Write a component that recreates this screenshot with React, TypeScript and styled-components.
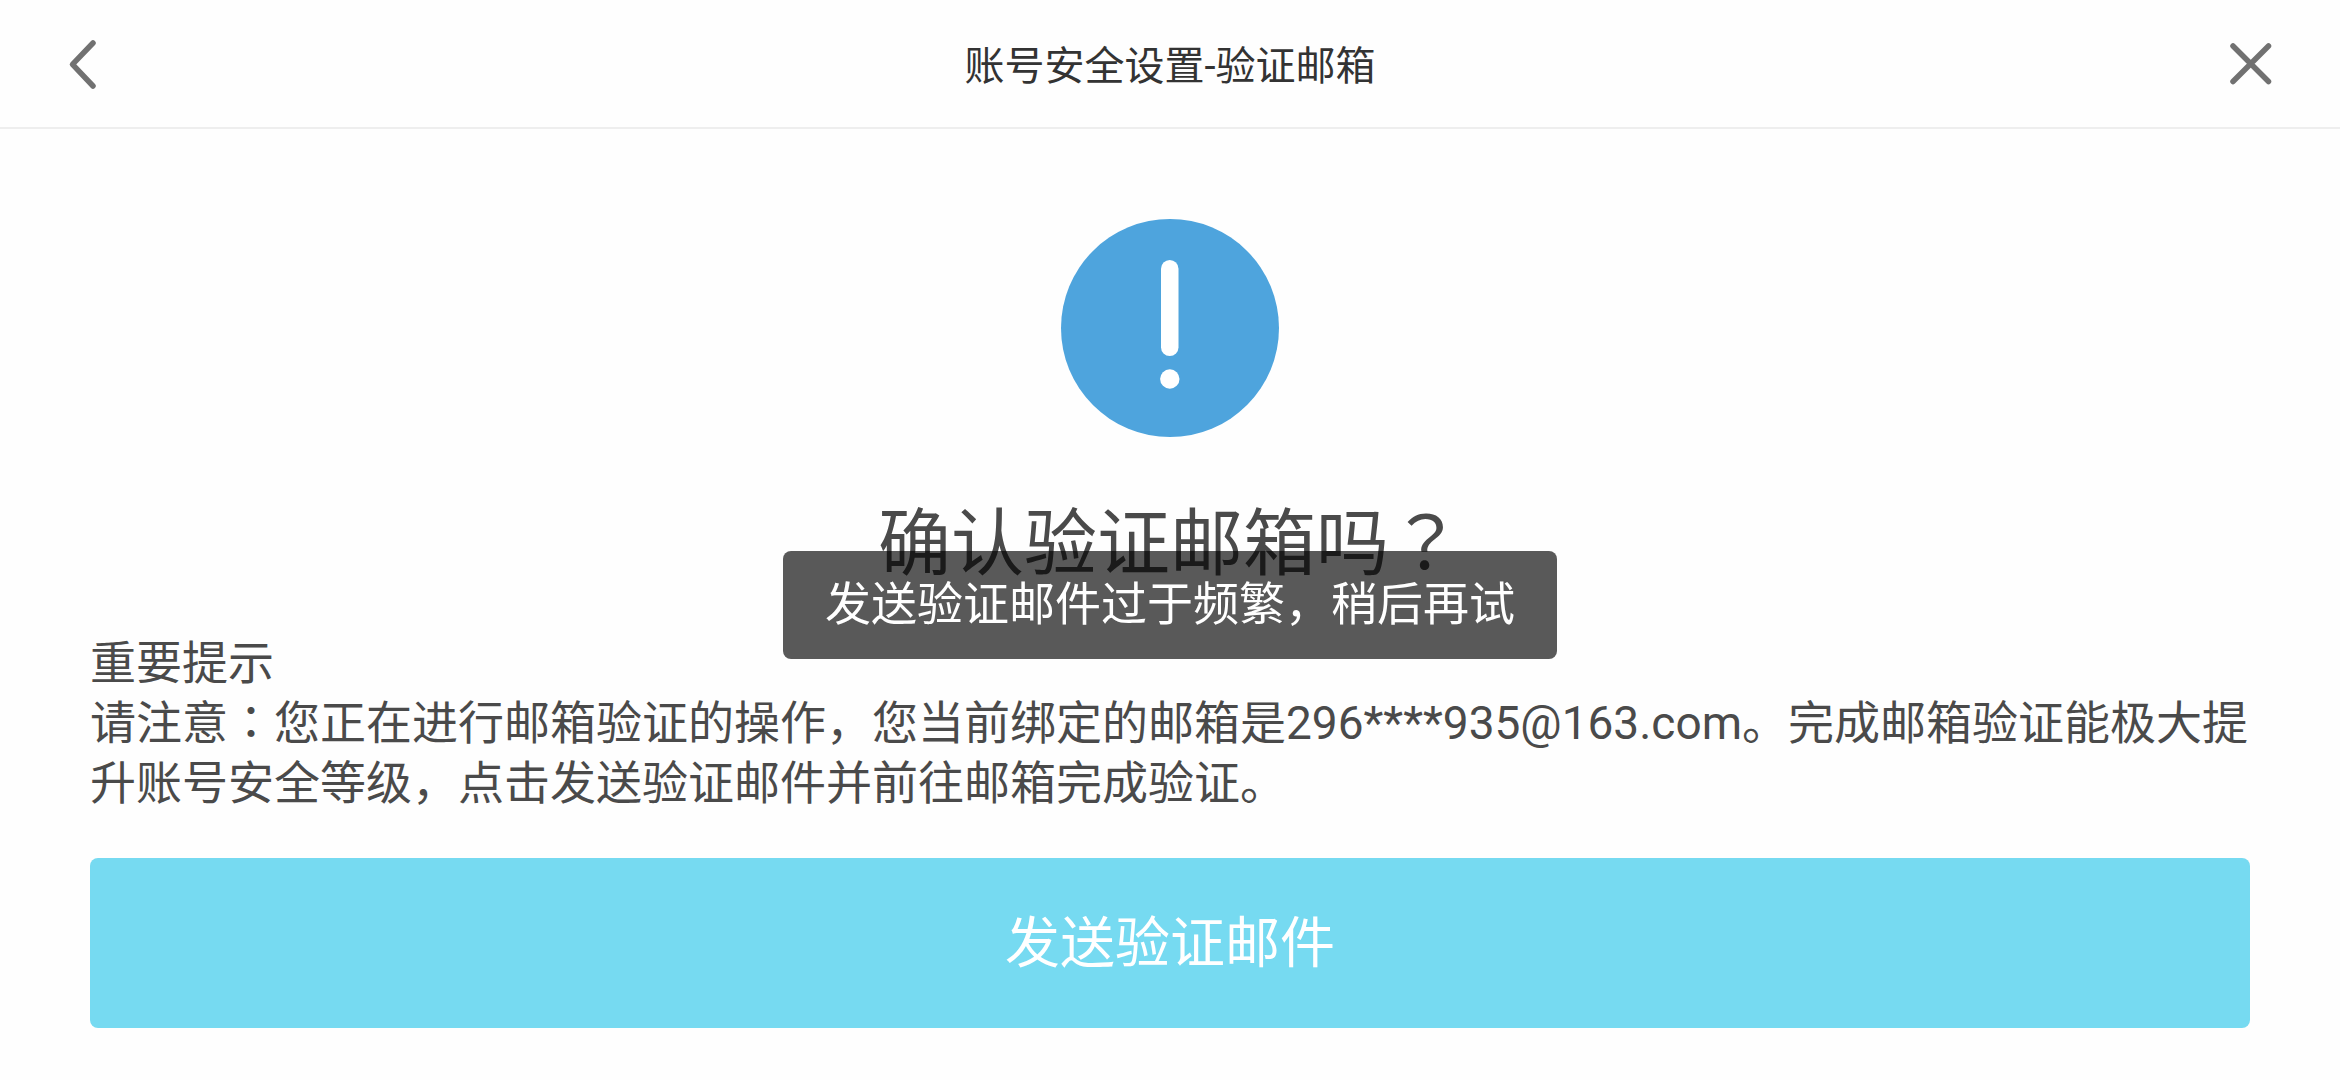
import React, { useState } from "react";
import styled, { createGlobalStyle } from "styled-components";

const GlobalStyle = createGlobalStyle`
  * {
    box-sizing: border-box;
  }

  body {
    margin: 0;
    background: #fefefe;
    color: #4a4a4a;
    font-family: Roboto, "Noto Sans CJK SC", sans-serif;
  }

  button {
    margin: 0;
    padding: 0;
    border: 0;
    background: none;
    font: inherit;
    cursor: pointer;
  }
`;

const Header = styled.header`
  display: flex;
  align-items: center;
  justify-content: space-between;
  height: 129px;
  padding: 0 56px;
  border-bottom: 2px solid #eeeeee;
`;

const HeaderTitle = styled.h1`
  margin: 0;
  padding-top: 6px;
  color: #333333;
  font-size: 40px;
  font-weight: 400;
  line-height: 60px;
`;

const IconButton = styled.button`
  display: flex;
  width: 64px;
  height: 64px;
  color: #717171;
`;

const Main = styled.main`
  display: flex;
  flex-direction: column;
  align-items: center;
  padding: 90px 90px 52px;
`;

const Question = styled.h2`
  margin: 0;
  padding: 51px 0 33px;
  font-size: 73px;
  font-weight: 400;
  line-height: 112px;
`;

const CenteredMark = styled.span`
  font-family: "Noto Sans CJK JP", sans-serif;
  line-height: 1;
`;

const Notice = styled.section`
  width: 100%;
  font-size: 46px;
  line-height: 60px;
`;

const NoticeTitle = styled.h3`
  margin: 0;
  font-size: inherit;
  font-weight: 400;
`;

const NoticeText = styled.p`
  margin: 0;
`;

const SendButton = styled.button`
  && {
    width: 100%;
    height: 170px;
    margin-top: 45px;
    border-radius: 8px;
    background: #76daf1;
    color: #ffffff;
    font-size: 55px;
    line-height: 80px;
  }
`;

const ToastLayer = styled.div`
  position: fixed;
  top: 551px;
  left: 0;
  right: 0;
  display: flex;
  justify-content: center;
  pointer-events: none;
`;

const Toast = styled.div`
  padding: 23px 42px 25px;
  border-radius: 8px;
  background: rgba(0, 0, 0, 0.65);
  color: #ffffff;
  font-size: 46px;
  line-height: 60px;
`;

function BackIcon() {
  return (
    <svg width="64" height="64" viewBox="0 0 64 64" fill="none" stroke="currentColor" strokeWidth="5.5" strokeLinecap="round" strokeLinejoin="round" aria-hidden="true">
      <path d="M37 11L16.5 32.3L37 54" />
    </svg>
  );
}

function CloseIcon() {
  return (
    <svg width="64" height="64" viewBox="0 0 64 64" fill="none" stroke="currentColor" strokeWidth="5.5" strokeLinecap="round" aria-hidden="true">
      <path d="M13 14L48.5 49.5M48.5 14L13 49.5" />
    </svg>
  );
}

function AlertIcon() {
  return (
    <svg width="218" height="218" viewBox="0 0 218 218" aria-hidden="true">
      <circle cx="109" cy="109" r="109" fill="#4ea4dd" />
      <rect x="100" y="41" width="17.5" height="96" rx="8.75" fill="#ffffff" />
      <circle cx="108.8" cy="160" r="9.7" fill="#ffffff" />
    </svg>
  );
}

export default function App() {
  const [toast, setToast] = useState("发送验证邮件过于频繁，稍后再试");

  return (
    <>
      <GlobalStyle />
      <Header>
        <IconButton type="button" aria-label="返回">
          <BackIcon />
        </IconButton>
        <HeaderTitle>账号安全设置-验证邮箱</HeaderTitle>
        <IconButton type="button" aria-label="关闭">
          <CloseIcon />
        </IconButton>
      </Header>
      <Main>
        <AlertIcon />
        <Question>
          确认验证邮箱吗<CenteredMark>？</CenteredMark>
        </Question>
        <Notice>
          <NoticeTitle>重要提示</NoticeTitle>
          <NoticeText>
            请注意<CenteredMark>：</CenteredMark>您正在进行邮箱验证的操作，您当前绑定的邮箱是296****935@163.com。完成邮箱验证能极大提升账号安全等级，点击发送验证邮件并前往邮箱完成验证。
          </NoticeText>
        </Notice>
        <SendButton type="button" onClick={() => setToast("发送验证邮件过于频繁，稍后再试")}>
          发送验证邮件
        </SendButton>
      </Main>
      <ToastLayer>
        <Toast role="status">{toast}</Toast>
      </ToastLayer>
    </>
  );
}
